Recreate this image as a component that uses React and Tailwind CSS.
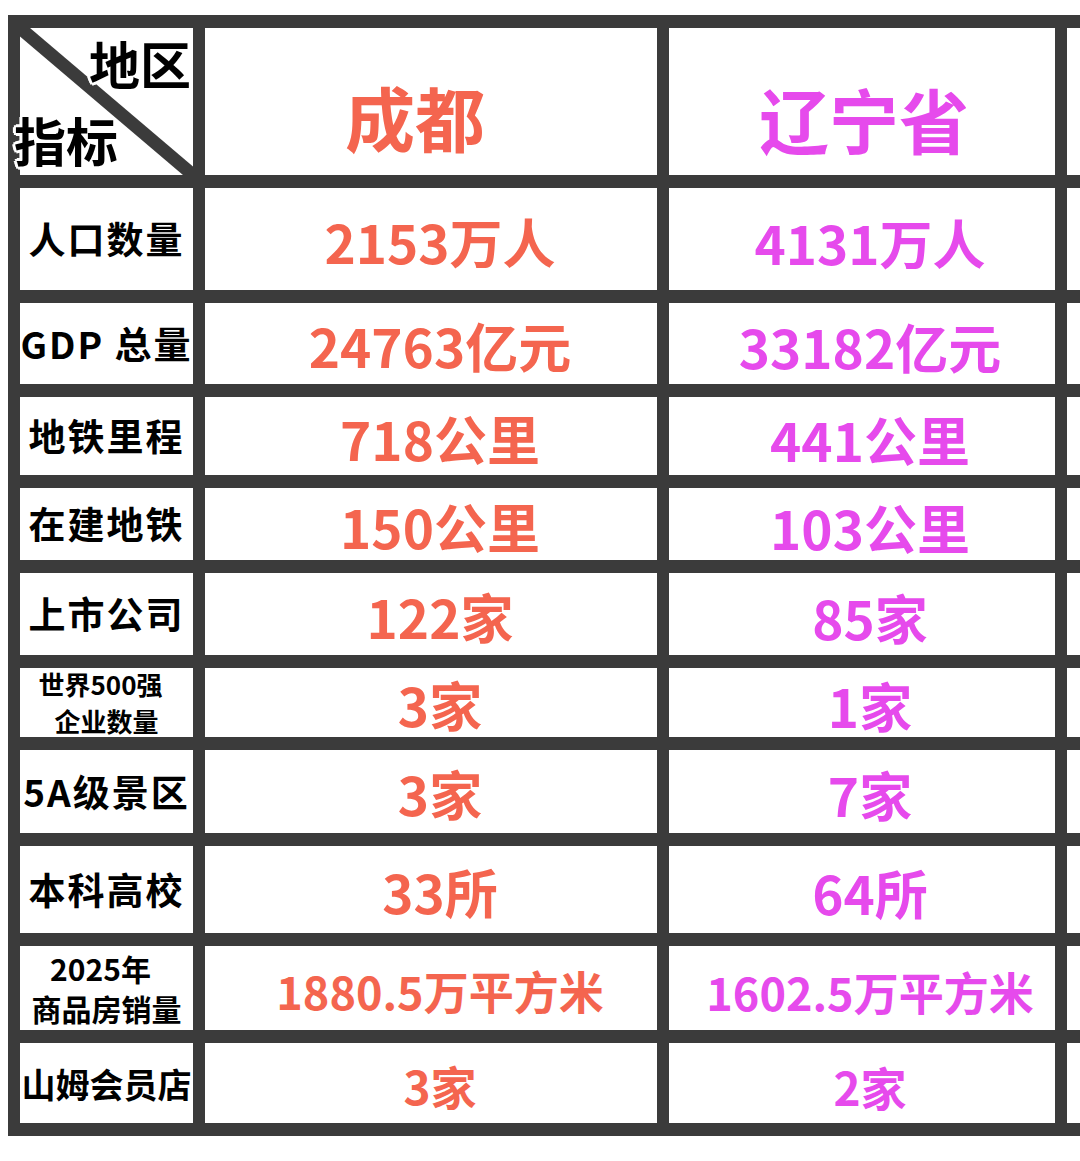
import React from 'react';

// Comparison table: 成都 vs 辽宁省

const rows = [
  { label: ['人口数量'], a: '2153万人', b: '4131万人' },
  { label: ['GDP 总量'], a: '24763亿元', b: '33182亿元' },
  { label: ['地铁里程'], a: '718公里', b: '441公里' },
  { label: ['在建地铁'], a: '150公里', b: '103公里' },
  { label: ['上市公司'], a: '122家', b: '85家' },
  { label: ['世界500强', '企业数量'], a: '3家', b: '1家', labelSize: 'text-[26px] gap-[11px]' },
  { label: ['5A级景区'], a: '3家', b: '7家' },
  { label: ['本科高校'], a: '33所', b: '64所' },
  { label: ['2025年', '商品房销量'], a: '1880.5万平方米', b: '1602.5万平方米', size: 'text-[45px]', labelSize: 'text-[30px] gap-[10px]' },
  { label: ['山姆会员店'], a: '3家', b: '2家', size: 'text-[46px]', labelSize: 'text-[34px] tracking-[0px]' },
];

const outline =
  '[text-shadow:2px_2px_0_#fff,-2px_-2px_0_#fff,2px_-2px_0_#fff,-2px_2px_0_#fff,0_3px_0_#fff,0_-3px_0_#fff,3px_0_0_#fff,-3px_0_0_#fff]';

function Label({ lines, labelSize }) {
  if (lines.length === 2) {
    return (
      <div className={`flex flex-col items-center leading-none font-bold text-black ${labelSize}`}>
        <span className="-ml-3">{lines[0]}</span>
        <span>{lines[1]}</span>
      </div>
    );
  }
  return (
    <span className={`${labelSize || 'text-[37px] tracking-[2px]'} font-bold text-black whitespace-nowrap`}>
      {lines[0]}
    </span>
  );
}

export default function App() {
  return (
    <div className="w-[1080px] h-[1161px] bg-white overflow-hidden font-['Noto_Sans_CJK_SC','Noto_Sans',sans-serif]">
      <div className="mt-[15px] ml-[8px] w-[1072px] bg-[#3b3b3b] pl-[12px] pt-[13px] pb-[13px] grid grid-cols-[173px_452px_386px_13px] grid-rows-[147px_102px_81px_78px_72px_82px_69px_83px_87px_84px_80px] gap-x-[12px] gap-y-[13px]">
        {/* header */}
        <div className="relative bg-white">
          <svg className="absolute inset-0" width="173" height="147" viewBox="0 0 173 147">
            <line x1="0" y1="0" x2="173" y2="147" stroke="#3b3b3b" strokeWidth="13" />
          </svg>
          <span className={`absolute right-[2px] top-[10px] text-[51px] font-bold leading-none text-black ${outline}`}>地区</span>
          <span className={`absolute left-[-6px] top-[86px] text-[52px] font-bold leading-none text-black ${outline}`}>指标</span>
        </div>
        <div className="bg-white flex items-center justify-center pt-[30px] pr-[32px]">
          <span className="text-[70px] font-bold text-[#f4654f] leading-none">成都</span>
        </div>
        <div className="bg-white flex items-center justify-center pt-[34px] pl-[4px]">
          <span className="text-[70px] font-bold text-[#e64aec] leading-none">辽宁省</span>
        </div>
        <div className="bg-white" />

        {rows.map((r, i) => (
          <React.Fragment key={i}>
            <div className="bg-white flex items-center justify-center">
              <Label lines={r.label} labelSize={r.labelSize} />
            </div>
            <div className="bg-white flex items-center justify-center pl-[18px] pt-[4px]">
              <span className={`${r.size || 'text-[53px]'} font-bold text-[#f4654f] leading-none whitespace-nowrap`}>
                {r.a}
              </span>
            </div>
            <div className="bg-white flex items-center justify-center pl-[16px] pt-[6px]">
              <span className={`${r.size || 'text-[53px]'} font-bold text-[#e64aec] leading-none whitespace-nowrap`}>
                {r.b}
              </span>
            </div>
            <div className="bg-white" />
          </React.Fragment>
        ))}
      </div>
    </div>
  );
}
